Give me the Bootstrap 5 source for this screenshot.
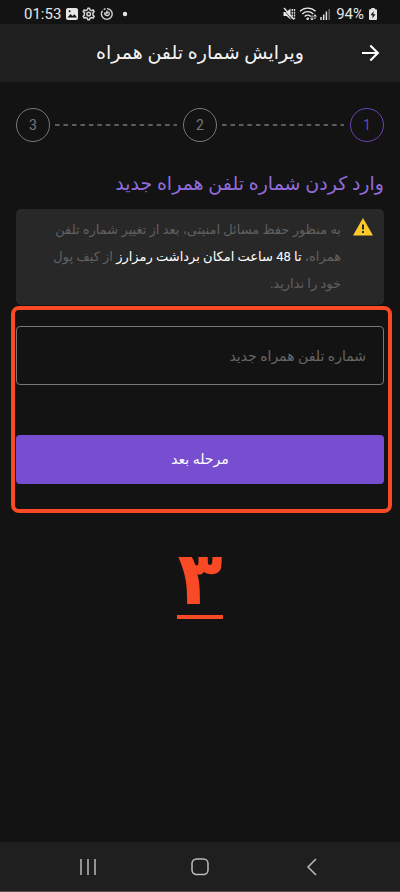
<!DOCTYPE html>
<html lang="fa" dir="ltr">
<head>
<meta charset="utf-8">
<meta name="viewport" content="width=device-width, initial-scale=1">
<title>ویرایش شماره تلفن همراه</title>
<link href="https://cdn.jsdelivr.net/npm/bootstrap@5.3.0/dist/css/bootstrap.min.css" rel="stylesheet">
<style>
:root { --page: #131313; --panel: #1f1f1f; --purple: #774ecf; --mark: #f94a25; }
body { background: var(--page); color: #f4f4f4; font-family: Roboto, "DejaVu Sans", sans-serif; }
.status-bar { height: 24px; padding: 4px 23px 0 24px; font-size: 15px; line-height: 20px; color: #e6e6e6; }
.status-group { gap: 5px; }
.app-bar { height: 58px; background: var(--panel); padding: 0 20px; }
.app-title { font-size: 19px; line-height: 28px; }
.app-bar-end { width: 20px; }
.content-area { padding: 26px 16px 0; }
.step { width: 34px; height: 34px; border: 1px solid #77777c; color: #77777c; font-size: 14px; line-height: 14px; }
.step.current { border-color: #6945b4; color: #6945b4; }
.dashes { height: 2px; margin: 0 4px; min-width: 0; }
.section-title { color: #926bdc; font-size: 19px; line-height: 28px; margin: 28px 0 11px; }
.notice { background: #282828; color: #606060; border-radius: 5px; padding: 7px 11px 8px 22px; gap: 12px; font-size: 13px; line-height: 27px; }
.notice strong { color: #fff; font-weight: 400; }
.notice svg { margin-top: 2px; }
.marked-form { border: 4px solid var(--mark); border-radius: 8px; margin: 1px -8px 0 -5px; padding: 16px 4px 25px 1px; }
.phone-field { height: 59px; background: transparent; border: 1px solid #77777c; border-radius: 4px; color: #fff; font-size: 14px; padding: 0 17px; }
.phone-field:focus { background: transparent; color: #fff; border-color: var(--purple); box-shadow: none; }
.phone-field::placeholder { color: #666; }
.next-btn { height: 49px; margin-top: 50px; background: var(--purple); color: #fff; border: 0; border-radius: 4px; font-size: 14px; }
.next-btn:hover { background: #6945b4; color: #fff; }
.figure-number { color: var(--mark); font-family: "DejaVu Sans", sans-serif; font-size: 74px; line-height: 74px; font-weight: 700; margin-top: 28px; }
.figure-number span { display: inline-block; border-bottom: 4px solid var(--mark); }
.nav-keys { height: 50px; background: var(--panel); border-bottom: 1px solid #595055; padding: 0 32px; }
.nav-keys .btn { color: #bcbcbc; }
</style>
</head>
<body class="d-flex flex-column min-vh-100">
<div class="status-bar d-flex align-items-center justify-content-between">
  <div class="status-group d-flex align-items-center">
    <span>01:53</span>
    <svg width="62" height="14" viewBox="0 0 62 14" fill="none" aria-hidden="true">
      <rect x="0" y="1" width="12" height="12" rx="2" fill="#e6e6e6"/>
      <path d="M1.500 10.500 4.500 7l2 2 2-1.800 2.500 3.300z" fill="#131313"/><circle cx="3.600" cy="4.200" r="1" fill="#131313"/>
      <g stroke="#d4d4d4" stroke-width="1.500"><path d="m22 1.200 1.400 0 .6 1.600 1.500.8 1.600-.7 1 1.600-1.200 1.400v2l1.200 1.400-1 1.700-1.600-.5-1.500.8-.6 1.500h-1.500l-.6-1.500-1.500-.8-1.600.5-1-1.700L18.400 7.900v-2L17.200 4.500l1-1.600 1.600.7 1.500-.8z"/><circle cx="22.700" cy="7" r="1.800"/></g>
      <circle cx="40.800" cy="7" r="5.400" stroke="#d4d4d4" stroke-width="1.400" stroke-dasharray="20 1.500 2 1.500"/>
      <path d="M38.500 5.500c0 4 4.800 4 4.800 1.200 0-2.500-3.800-2.300-3.500 0M41 3.500v4" stroke="#d4d4d4" stroke-width="1.200"/>
      <circle cx="59" cy="7" r="2.200" fill="#e6e6e6"/>
    </svg>
  </div>
  <div class="status-group d-flex align-items-center">
    <svg width="48" height="14" viewBox="0 0 48 14" fill="none" aria-hidden="true">
      <path d="M.5 5h3L7.500 1.500v11L3.500 9h-3z" fill="#e6e6e6"/><path d="m1 1 10 11.500" stroke="#e6e6e6" stroke-width="1.300"/><path d="m0 2 9 10.500" stroke="#131313" stroke-width=".7"/>
      <path d="M9.300 2v10M11.500 2v10" stroke="#d4d4d4" stroke-width="1.400" stroke-dasharray="2 .8"/>
      <g stroke="#e6e6e6" stroke-width="1.400"><path d="M17 4.300c4.300-4.300 11.200-4.300 15.500 0M19.300 6.900c3-3 7.900-3 10.900 0M21.700 9.400c1.700-1.700 4.300-1.700 6 0"/></g><circle cx="24.700" cy="11.700" r="1.300" fill="#e6e6e6"/>
      <path d="M29 8.500v4.500m-1.500-1.700 1.500 1.700 1.300-1.700M32 12V8m-1.500 1.500L32 7.700l1.500 1.800" stroke="#e6e6e6"/>
      <path d="M38 10v3M40.700 7.500V13M43.400 4.500V13" stroke="#ddd" stroke-width="1.500"/><path d="M46.200 2v11" stroke="#666" stroke-width="1.500"/>
    </svg>
    <span>94%</span>
    <svg width="8" height="12" viewBox="0 0 8 12" aria-hidden="true"><path d="M2.300 0h3.400v1.300H7a1 1 0 0 1 1 1V11a1 1 0 0 1-1 1H1a1 1 0 0 1-1-1V2.300a1 1 0 0 1 1-1h1.300z" fill="#e6e6e6"/><path d="M4.700 3 1.500 7.200h2.200L3.300 10.500 6.500 6.200H4.300z" fill="#131313"/></svg>
  </div>
</div>
<header class="app-bar d-flex align-items-center justify-content-between">
  <span class="app-bar-end"></span>
  <h1 class="app-title fw-normal m-0" dir="rtl">ویرایش شماره تلفن همراه</h1>
  <button type="button" class="btn p-0 border-0 app-bar-end d-flex" aria-label="بازگشت">
    <svg width="20" height="20" viewBox="0 0 20 20" fill="none" stroke="#fff" stroke-width="2.200"><path d="M2 10h15.500M10.300 2.500 17.800 10l-7.500 7.500"/></svg>
  </button>
</header>
<main class="content-area flex-grow-1">
  <div class="d-flex align-items-center" dir="rtl">
    <span class="step current rounded-circle d-flex align-items-center justify-content-center flex-shrink-0">1</span>
    <svg class="dashes flex-fill w-100" viewBox="0 0 124 2" preserveAspectRatio="none" aria-hidden="true"><path d="M1 1h121" stroke="#77777a" stroke-width="1.500" stroke-dasharray="4.500 3.900"/></svg>
    <span class="step rounded-circle d-flex align-items-center justify-content-center flex-shrink-0">2</span>
    <svg class="dashes flex-fill w-100" viewBox="0 0 124 2" preserveAspectRatio="none" aria-hidden="true"><path d="M1 1h121" stroke="#77777a" stroke-width="1.500" stroke-dasharray="4.500 3.900"/></svg>
    <span class="step rounded-circle d-flex align-items-center justify-content-center flex-shrink-0">3</span>
  </div>
  <h2 class="section-title fw-normal" dir="rtl">وارد کردن شماره تلفن همراه جدید</h2>
  <div class="notice d-flex align-items-start" dir="rtl">
    <svg class="flex-shrink-0" width="20" height="18" viewBox="0 0 20 18" aria-hidden="true"><path d="M10 0 20 17.500H0z" fill="#ffc928"/><path d="M9 6.500h2v5H9zM9 13h2v2H9z" fill="#282828"/></svg>
    <p class="m-0">به منظور حفظ مسائل امنیتی، بعد از تغییر شماره تلفن همراه، <strong>تا 48 ساعت امکان برداشت رمزارز</strong> از کیف پول خود را ندارید.</p>
  </div>
  <form class="marked-form" dir="rtl">
    <input type="tel" class="form-control phone-field" dir="rtl" placeholder="شماره تلفن همراه جدید" aria-label="شماره تلفن همراه جدید">
    <button type="button" class="btn next-btn w-100">مرحله بعد</button>
  </form>
  <div class="figure-number text-center"><span>۳</span></div>
</main>
<nav class="nav-keys row g-0 align-items-center" aria-label="System">
  <div class="col d-flex justify-content-center"><button type="button" class="btn p-2 border-0 d-flex" aria-label="Recents"><svg width="16" height="18" viewBox="0 0 16 18" stroke="currentColor" stroke-width="1.500"><path d="M1 1v16M8 1v16M15 1v16"/></svg></button></div>
  <div class="col d-flex justify-content-center"><button type="button" class="btn p-2 border-0 d-flex" aria-label="Home"><svg width="18" height="18" viewBox="0 0 18 18" fill="none" stroke="currentColor" stroke-width="1.500"><rect x="1" y="1" width="16" height="15.500" rx="4.500"/></svg></button></div>
  <div class="col d-flex justify-content-center"><button type="button" class="btn p-2 border-0 d-flex" aria-label="Back"><svg width="12" height="18" viewBox="0 0 12 18" fill="none" stroke="currentColor" stroke-width="1.500"><path d="M10 1 2 9l8 8"/></svg></button></div>
</nav>
<script src="https://cdn.jsdelivr.net/npm/bootstrap@5.3.0/dist/js/bootstrap.bundle.min.js"></script>
</body>
</html>
